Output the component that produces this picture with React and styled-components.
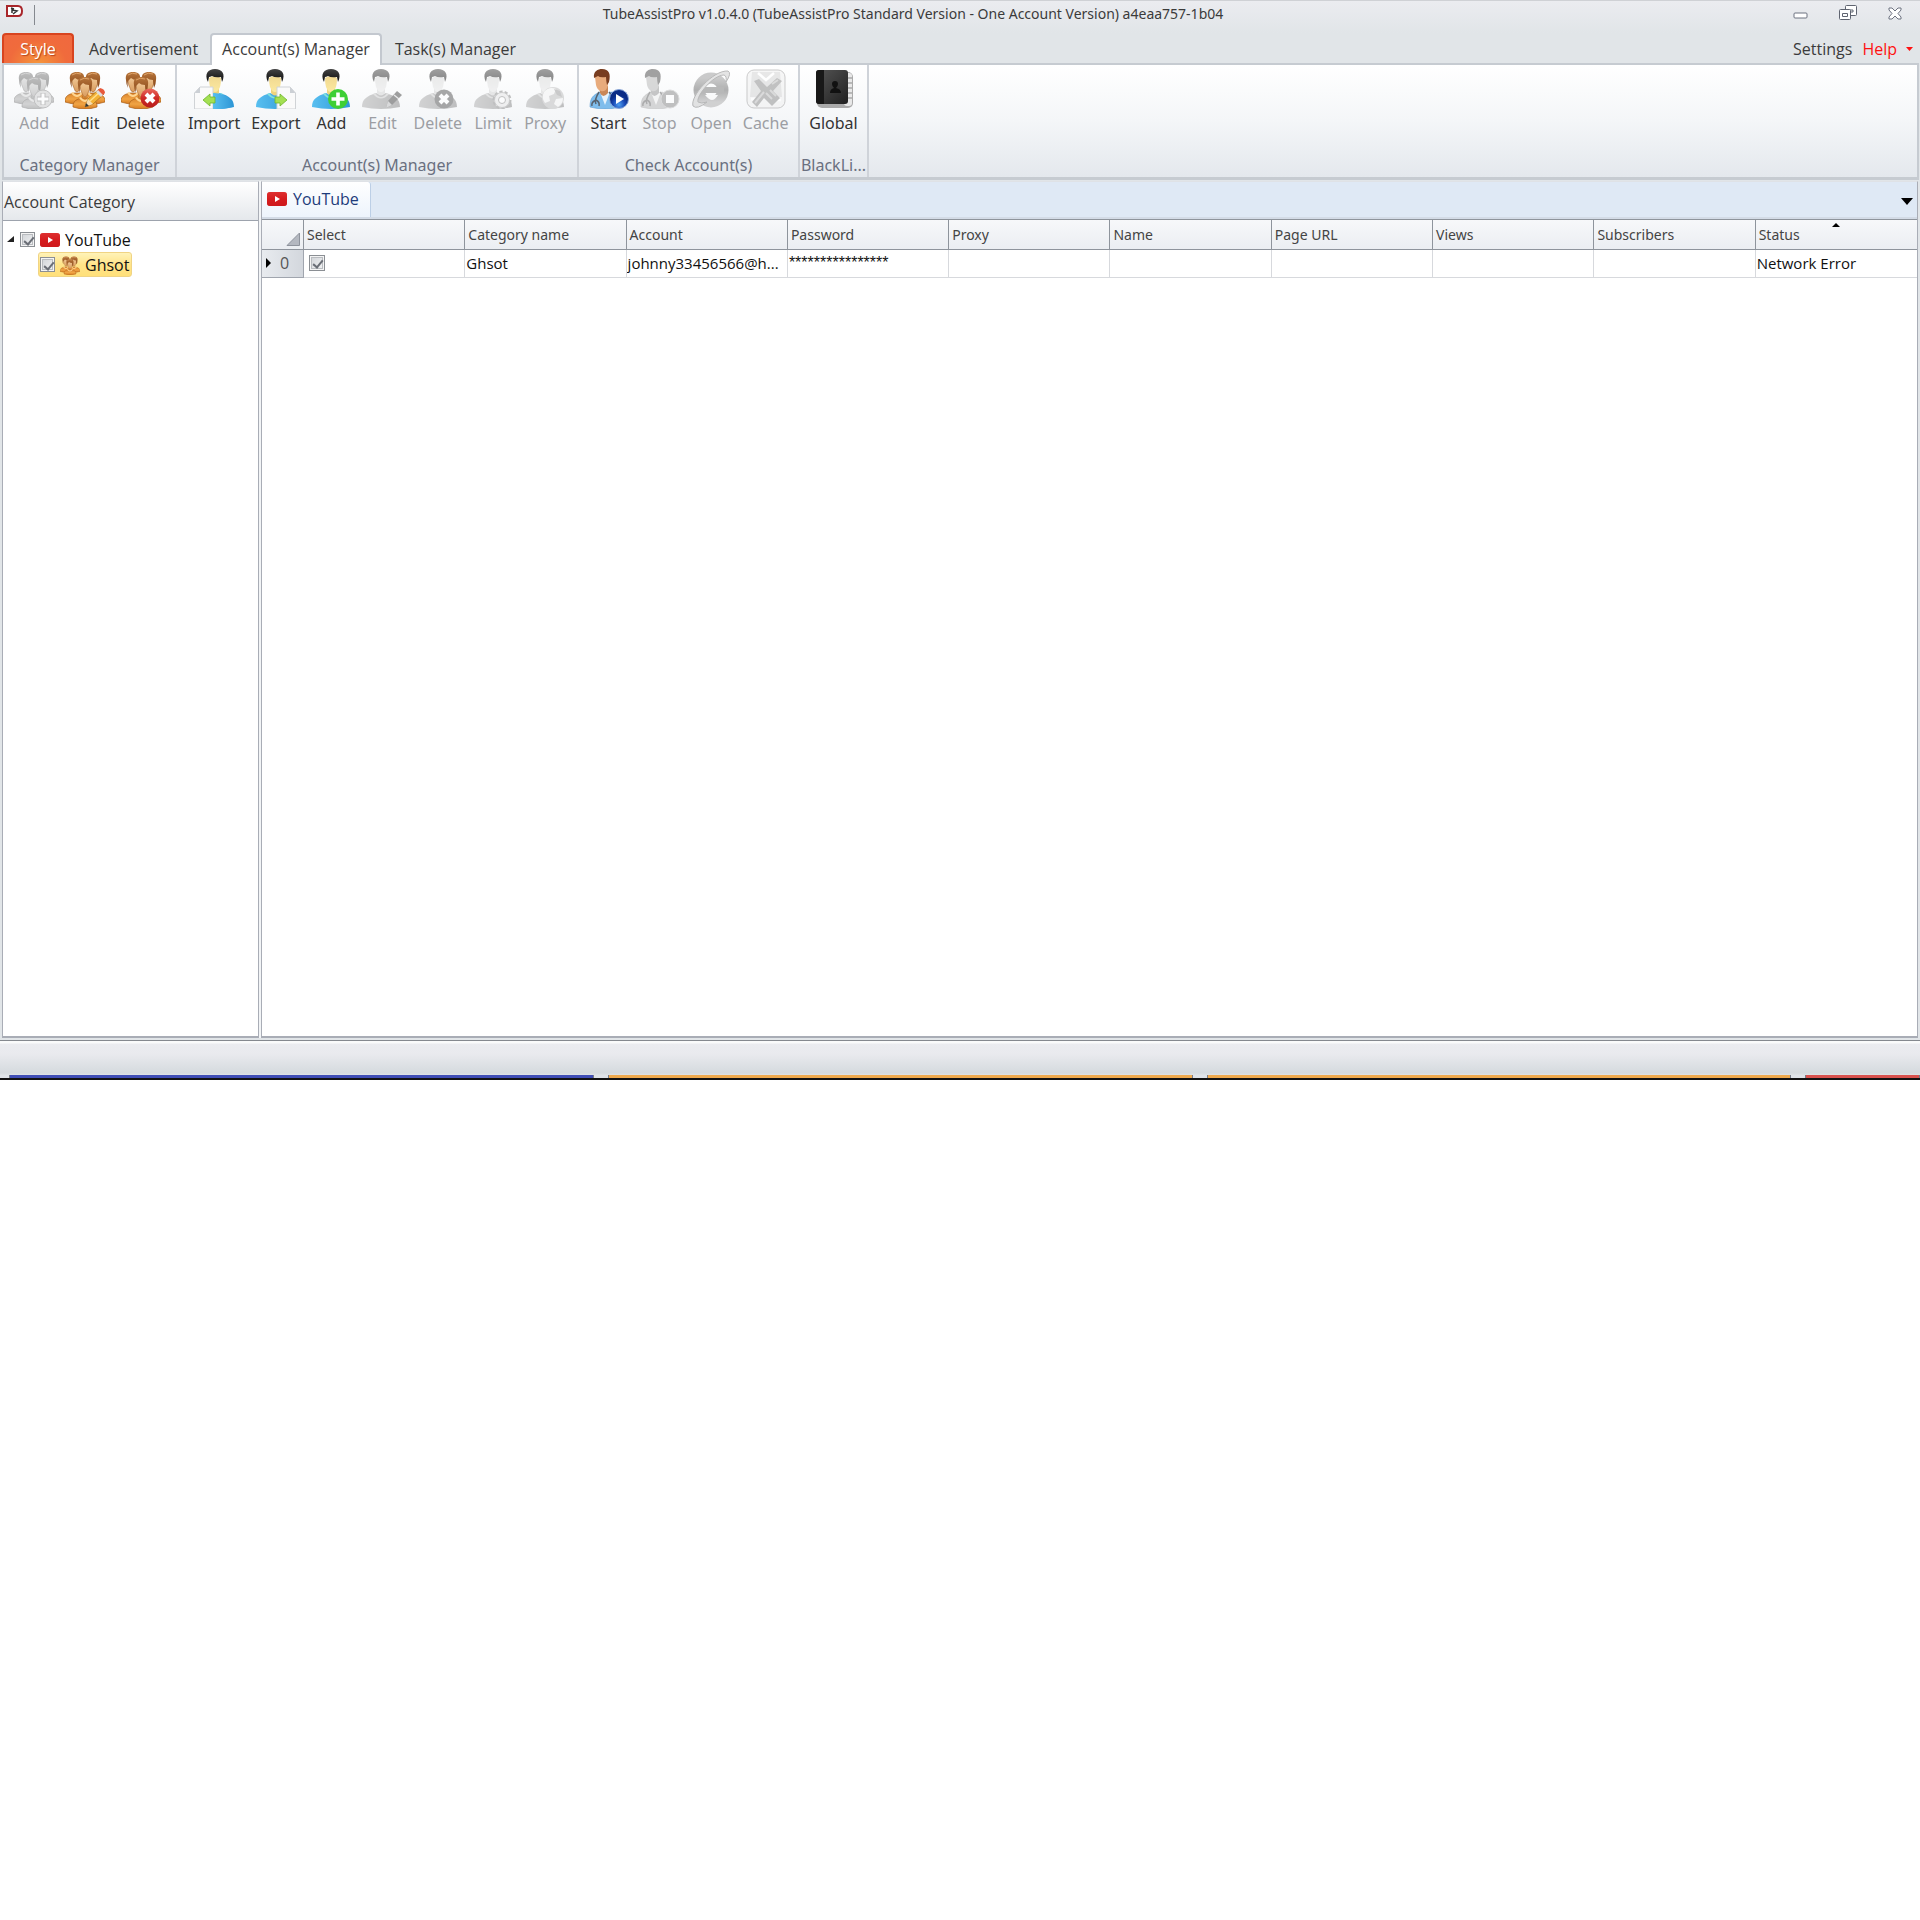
import styled, { createGlobalStyle, css } from 'styled-components'

const GlobalStyle = createGlobalStyle`
  * {
    box-sizing: border-box;
  }
  body {
    margin: 0;
    background: #fff;
    font-family: 'Open Sans', 'Noto Sans', sans-serif;
    font-size: 16px;
    line-height: 22px;
    color: #3b3b3b;
  }
  button {
    margin: 0;
    padding: 0;
    border: 0;
    background: none;
    color: inherit;
    font: inherit;
  }
`

const Window = styled.div`
  display: flex;
  flex-direction: column;
  min-height: 56.25vw;
  background: #e1e5e8;
`

const TitleBar = styled.header`
  display: flex;
  align-items: flex-start;
  height: 33px;
  padding: 4px 0 0 6px;
  border-top: 1px solid #cfd1d5;
  background: linear-gradient(#ebecf0, #e1e5e8);
`

const QuickAccess = styled.div`
  display: flex;
  width: 29px;
  height: 20px;
  border-right: 1px solid #85898f;
`

const WindowTitle = styled.h1`
  flex: 1;
  margin: 0;
  font-family: 'Noto Sans', sans-serif;
  font-size: 14px;
  font-weight: 400;
  line-height: 18px;
  text-align: center;
`

const WindowButtons = styled.div`
  display: flex;
  gap: 27px;
  padding-right: 15px;
  & > button {
    width: 20px;
    height: 18px;
  }
`

const TabBar = styled.nav`
  display: flex;
  align-items: flex-end;
  padding: 0 2px;
`

const RibbonTab = styled.button`
  position: relative;
  height: 30px;
  padding: 0 10px 0 11px;
  border: 1px solid transparent;
  border-bottom: 0;
  border-radius: 4px 4px 0 0;
  ${(props) =>
    props.$active &&
    css`
      z-index: 1;
      height: 32px;
      margin: 0 1px -2px;
      padding: 0 10px 2px;
      border: 2px solid #c3c8cf;
      border-bottom: 0;
      background: #fff;
    `}
`

const StyleButton = styled.button`
  width: 72px;
  height: 30px;
  margin-right: 3px;
  padding-bottom: 1px;
  border: 2px solid #d8441f;
  border-bottom: 0;
  border-radius: 4px 4px 0 0;
  background: radial-gradient(ellipse at 50% 110%, #f5983c, #f06b3c 60%, #f0683f);
  color: #fff;
  text-shadow: 1px 1px 1px #b8431c;
`

const TabBarEnd = styled.div`
  display: flex;
  gap: 10px;
  height: 28px;
  margin-left: auto;
  padding-right: 5px;
`

const HelpButton = styled.button`
  display: flex;
  align-items: center;
  gap: 9px;
  color: #f11;
`

const Ribbon = styled.section`
  display: flex;
  height: 117px;
  margin: 0 1px 0 2px;
  border: 2px solid #c6cbd1;
  border-bottom-width: 3px;
  background: linear-gradient(#fff, #f4f6f8 50%, #e4e8ed);
  font-family: 'Noto Sans', sans-serif;
`

const Group = styled.div`
  display: flex;
  flex-direction: column;
  justify-content: space-between;
  width: ${(props) => props.$width}px;
  border-right: 2px solid #cfd3d9;
  color: #6a7080;
`

const GroupButtons = styled.div`
  display: flex;
  justify-content: center;
  gap: 11px;
  padding-top: 4px;
`

const GroupLabel = styled.div`
  height: 23px;
  text-align: center;
  white-space: nowrap;
`

const ToolButton = styled.button`
  display: flex;
  flex-direction: column;
  align-items: center;
  gap: 3px;
  min-width: 40px;
  color: #333;
  &:disabled {
    color: #9c9ea3;
  }
  &:disabled > svg {
    filter: grayscale(1);
    opacity: 0.5;
  }
`

const Workspace = styled.main`
  flex: 1;
  display: flex;
  gap: 2px;
  margin: 1px 2px 2px;
  background: #f2f4f6;
`

const SidePanel = styled.aside`
  display: flex;
  flex-direction: column;
  width: 257px;
  border: 1px solid #a9adb6;
  border-bottom-width: 2px;
  border-top-color: #dfe2e6;
  background: #fff;
`

const PanelTitle = styled.h2`
  margin: 0;
  padding: 9px 1px 7px;
  border-bottom: 1px solid #9da3ad;
  background: linear-gradient(#fff, #e5e8ec);
  font-size: 16px;
  font-weight: 400;
`

const Tree = styled.ul`
  margin: 0;
  padding: 6px 0 0;
  list-style: none;
  color: #111;
`

const TreeRow = styled.li`
  display: flex;
  align-items: center;
  gap: 5px;
  width: fit-content;
  height: 25px;
  margin-left: ${(props) => props.$indent}px;
  padding: 0 2px 0 1px;
  border: 1px solid transparent;
  border-radius: 3px;
  ${(props) =>
    props.$selected &&
    css`
      border-color: #f0d484;
      background: linear-gradient(#fff3b8, #ffe48a 50%, #ffe07a);
    `}
  & > label {
    display: flex;
    align-items: center;
    gap: 5px;
  }
`

const CheckBox = styled.input.attrs({ type: 'checkbox' })`
  appearance: none;
  position: relative;
  width: 15px;
  height: 15px;
  margin: 0;
  border: 1px solid #8b8f94;
  background: linear-gradient(135deg, #cfd2d6, #f4f5f6);
  box-shadow: inset 0 0 0 1px #f4f4f4, inset 0 0 0 2px #b9bcc0;
  &:checked::after {
    content: '';
    position: absolute;
    top: 2px;
    left: 5px;
    width: 4px;
    height: 8px;
    border: solid #6a6e76;
    border-width: 0 2px 2px 0;
    transform: rotate(40deg);
  }
`

const ContentPanel = styled.section`
  flex: 1;
  display: flex;
  flex-direction: column;
  border: 1px solid #a9adb6;
  border-bottom-width: 2px;
  border-top-color: #dfe2e6;
  background: #fff;
`

const DocumentTabs = styled.div`
  display: flex;
  align-items: center;
  justify-content: space-between;
  height: 37px;
  padding: 0 4px 2px 0;
  border-bottom: 2px solid #d3dbe6;
  background: #dfe9f5;
`

const DocumentTab = styled.button`
  display: flex;
  align-items: center;
  gap: 6px;
  align-self: flex-start;
  height: 35px;
  padding: 0 11px 1px 5px;
  border-right: 1px solid #bccfe6;
  border-radius: 0 3px 0 0;
  background: linear-gradient(#fff, #edf4fc);
  color: #1e3c7b;
`

const Grid = styled.table`
  width: 100%;
  border-collapse: separate;
  border-spacing: 0;
  table-layout: fixed;
  color: #111;
`

const HeadCell = styled.th`
  position: relative;
  width: ${(props) => (props.$gutter ? '42px' : 'auto')};
  height: 31px;
  padding: 0 0 0 3px;
  border: solid #8e949c;
  border-width: 1px 1px 1px 0;
  background: linear-gradient(#f7f8fa, #ebeef2);
  color: #444;
  font-family: 'Noto Sans', sans-serif;
  font-size: 14px;
  font-weight: 400;
  line-height: 20px;
  text-align: left;
  &:last-child {
    border-right: 0;
  }
`

const Corner = styled.svg`
  position: absolute;
  right: 3px;
  bottom: 3px;
`

const SortMark = styled.svg`
  position: absolute;
  top: 3px;
  left: 50%;
  margin-left: -4px;
`

const Cell = styled.td`
  height: 28px;
  padding: 0 4px 2px 1px;
  border: solid #d7d9dd;
  border-width: 0 1px 1px 0;
  overflow: hidden;
  text-overflow: ellipsis;
  white-space: nowrap;
  font-size: 15px;
  line-height: 20px;
  &:last-child {
    border-right: 0;
  }
`

const PasswordCell = styled(Cell)`
  font-family: 'Liberation Sans', sans-serif;
  font-size: 16px;
`

const RowHead = styled.th`
  height: 28px;
  padding: 0;
  border: solid #a0a5ae;
  border-width: 0 1px 1px 0;
  background: linear-gradient(90deg, #e8ebef, #d3d7dd);
  font-size: 16px;
  font-weight: 400;
  line-height: 20px;
  color: #555;
  & > span {
    display: flex;
    align-items: center;
    gap: 9px;
    padding: 0 0 1px 4px;
  }
`

const CheckCell = styled(Cell)`
  & > input {
    display: block;
    width: 16px;
    height: 16px;
    margin-left: 4px;
  }
`

const StatusBar = styled.footer`
  height: 35px;
  border-top: 1px solid #85898f;
  background: linear-gradient(#fafbfb 2px, #ebecf0 3px, #e9eaee 13px, #d5dade 32px, #dfe3e6);
`

const Taskbar = styled.div`
  display: flex;
  gap: 14px;
  height: 5px;
  padding-left: 9px;
  border-bottom: 2px solid #111;
  overflow: hidden;
  background: #dfe3e8;
`

const TaskItem = styled.div`
  flex: ${(props) => (props.$last ? '1' : '0 0 30.6%')};
  background: ${(props) => props.$color};
  border: solid #777c88;
  border-width: 0 1px;
`

const Defs = styled.svg`
  position: absolute;
`

const gradients = (
  <Defs width="0" height="0" aria-hidden="true">
    <defs>
      <linearGradient id="shirt" x2="1">
        <stop stopColor="#58bff0" />
        <stop offset="1" stopColor="#2e97d6" />
      </linearGradient>
      <linearGradient id="skin" x2="0" y2="1">
        <stop stopColor="#f1d890" />
        <stop offset="1" stopColor="#fbe9a0" />
      </linearGradient>
      <linearGradient id="hair" x2="0" y2="1">
        <stop stopColor="#444" />
        <stop offset="1" stopColor="#0c0c0c" />
      </linearGradient>
      <linearGradient id="orange" x2="0" y2="1">
        <stop stopColor="#d9822b" />
        <stop offset=".55" stopColor="#f0a445" />
        <stop offset="1" stopColor="#d67a1e" />
      </linearGradient>
      <linearGradient id="brown" x2="0" y2="1">
        <stop stopColor="#b8763c" />
        <stop offset="1" stopColor="#844416" />
      </linearGradient>
      <linearGradient id="tan" x2="0" y2="1">
        <stop stopColor="#f6d3a4" />
        <stop offset="1" stopColor="#d99b5c" />
      </linearGradient>
      <linearGradient id="red" x2="0" y2="1">
        <stop stopColor="#ea6a5e" />
        <stop offset=".5" stopColor="#cf2a26" />
        <stop offset="1" stopColor="#b81e1c" />
      </linearGradient>
      <radialGradient id="play" cy=".8">
        <stop stopColor="#4f9ff0" />
        <stop offset=".6" stopColor="#1b4cb8" />
        <stop offset="1" stopColor="#0b2c86" />
      </radialGradient>
      <linearGradient id="steel" x2="0" y2="1">
        <stop stopColor="#999" />
        <stop offset=".5" stopColor="#666" />
        <stop offset="1" stopColor="#aaa" />
      </linearGradient>
      <linearGradient id="book" x2="1" y2="1">
        <stop stopColor="#555" />
        <stop offset="1" stopColor="#202020" />
      </linearGradient>
    </defs>
  </Defs>
)

const Svg = ({ children, size = 40 }) => (
  <svg width={size} height={size} viewBox="0 0 40 40" aria-hidden="true">
    {children}
  </svg>
)

const Member = ({ x, y }) => (
  <g transform={`translate(${x} ${y})`}>
    <path d="M-12 20c0-5 4-7 9-8h6c5 1 9 3 9 8v1q-12 4-24 0z" fill="url(#orange)" stroke="#a65c17" strokeWidth=".7" />
    <path d="M-4 11q4 6 8 0l2 1q-6 8-12 0z" fill="#ffd590" />
    <path d="M-5-2q0-5 5-5t5 5q0 6-2 9-1 4-3 4t-3-4q-2-3-2-9z" fill="url(#tan)" stroke="#a96a31" strokeWidth=".6" />
    <path d="M-7-1c-1-6 2-8 7-8s8 2 7 8q0 4-2 8-1-6-1-8-4 0-6-2-2 2-3 3-1 3 0 7-2-4-2-8z" fill="url(#brown)" />
    <path d="M-5-6q4-3 9-1" fill="none" stroke="#dda268" strokeWidth="1" />
  </g>
)

const People = ({ size, children }) => (
  <Svg size={size}>
    <Member x={12} y={12} />
    <Member x={28} y={12} />
    <Member x={20} y={17} />
    {children}
  </Svg>
)

const Person = ({ x = 0, children }) => (
  <Svg>
    <g transform={`translate(${x} 0)`}>
      <path d="M1 38c0-8 5-11 14-14l5 2 5-2c9 3 14 6 14 14q-19 4-38 0z" fill="url(#shirt)" />
      <path d="M14 24q6 8 12 0l2 1q-8 9-16 0z" fill="#7fe0e0" />
      <path d="M16 18h8v6q-4 5-8 0z" fill="#efd37c" />
      <path d="M14 9q6-4 12 0 0 6-1 9-2 5-5 5t-5-5q-1-3-1-9z" fill="url(#skin)" />
      <path d="M13 13C9 5 13 0 20 0s11 5 7 13l-1-5q-6 1-9-1-2 1-3 1z" fill="url(#hair)" />
    </g>
    {children}
  </Svg>
)

const Plus = ({ cx, cy, fill = '#3ecf35' }) => (
  <g transform={`translate(${cx} ${cy})`}>
    <circle r="10" fill={fill} />
    <path d="M0-6.500V6.500M-6.500 0H6.500" stroke="#fff" strokeWidth="3.600" />
  </g>
)

const GrayPlus = () => (
  <g transform="translate(29 30)">
    <circle r="9" fill="#ccc" stroke="#888" />
    <path d="M0-6V6M-6 0H6" stroke="#888" strokeWidth="5" />
    <path d="M0-5.500V5.500M-5.500 0H5.500" stroke="#fff" strokeWidth="3" />
  </g>
)

const Cross = ({ cx, cy, fill = 'url(#red)' }) => (
  <g transform={`translate(${cx} ${cy})`}>
    <circle r="9.500" fill={fill} />
    <path d="M-4-4L4 4M4-4L-4 4" stroke="#fff" strokeWidth="4" />
  </g>
)

const Pencil = ({ x, y }) => (
  <g transform={`translate(${x} ${y})`}>
    <path d="M0 18l3-8 11-10 5 5-11 10z" fill="#f3b236" stroke="#a8741d" strokeWidth=".8" />
    <path d="M5 12l11-10" stroke="#ffe08b" strokeWidth="1.500" />
    <path d="M12 2l3-3q5 1 5 5l-3 3z" fill="#e8593c" />
    <path d="M11 3l2-2 5 5-2 2z" fill="#ddd" />
    <path d="M0 18l3-8 5 5z" fill="#f6dcb0" />
    <path d="M0 18l1-4 3 3z" fill="#333" />
  </g>
)

const GrayPencil = () => (
  <g transform="translate(24 22)">
    <path d="M0 17l2-7L11 0l5 4-10 10z" fill="#444" />
    <path d="M8 4l5 4" stroke="#ddd" strokeWidth="1.500" />
    <path d="M0 17l2-7 4 4z" fill="#bbb" />
  </g>
)

const Sheet = ({ x, flip }) => (
  <g transform={flip ? `translate(${x} 0) scale(-1 1)` : `translate(${x} 0)`}>
    <path d="M6 18h13v22H.5V24z" fill="#fafafa" stroke="#d0d3d6" />
    <path d="M6 18v6H.5z" fill="#ccd0d5" />
  </g>
)

const Gear = () => (
  <g transform="translate(29 31)">
    <circle r="8" fill="#ddd" stroke="#888" strokeWidth="3" strokeDasharray="3 2" />
    <circle r="7.500" fill="#e6e6e6" stroke="#999" strokeWidth=".8" />
    <circle r="3.500" fill="#fff" stroke="#888" />
  </g>
)

const Globe = () => (
  <g transform="translate(28 29)">
    <circle r="11" fill="#bbb" />
    <path d="M-9-6q5-6 12-3l-2 5-5 2 1 5-5 2q-4-5-1-11zM3 1l7-1q0 6-5 9l-4-3z" fill="#f4f4f4" />
    <path d="M1-9l6 2 2 6-5-2z" fill="#999" />
  </g>
)

const Doctor = ({ children }) => (
  <Svg>
    <path d="M1 38c0-9 3-12 10-15l6 3 5-3c7 3 9 7 9 15q-15 4-30 0z" fill="#7fbdec" stroke="#5a9bd0" strokeWidth=".6" />
    <path d="M11 23l5 13 5-13z" fill="#e7f3fc" />
    <path d="M10 17h9v7q-5 6-8 0z" fill="#c98757" />
    <path d="M6 8q7-6 13 0 1 7-1 11-2 4-6 3-4-1-5-6z" fill="#e8ab7c" />
    <path d="M5 9C4 2 9 0 13 0c7 0 9 5 7 13l-2 3q-1-5-1-8-6 1-8-1-2 1-4 2z" fill="#783d20" />
    <path d="M10 23q-5 8-3 12M20 23q6 6 4 12M7 31q-5 2-4 6M7 31q4 2 3 6" fill="none" stroke="#56616d" strokeWidth="1.500" />
    {children}
  </Svg>
)

const Tube = ({ width }) => (
  <svg width={width} height="16" viewBox="0 0 20 16" aria-hidden="true">
    <rect y="1" width="20" height="14" rx="3" fill="url(#red)" />
    <rect y="1" width="20" height="14" rx="3" fill="#d8171d" opacity=".7" />
    <path d="M8 5l5 3-5 3z" fill="#fff" />
  </svg>
)

const Triangle = ({ width, height, fill }) => (
  <svg width={width} height={height} viewBox="0 0 10 6" preserveAspectRatio="none" aria-hidden="true">
    <path d="M0 0h10L5 6z" fill={fill} />
  </svg>
)

const groups = [
  {
    label: 'Category Manager',
    width: 173,
    tools: [
      { label: 'Add', off: true, icon: <People><GrayPlus /></People> },
      { label: 'Edit', icon: <People><Pencil x={20} y={20} /></People> },
      { label: 'Delete', icon: <People><Cross cx={29} cy={29} /></People> },
    ],
  },
  {
    label: 'Account(s) Manager',
    width: 402,
    tools: [
      {
        label: 'Import',
        icon: (
          <Person x={1}>
            <Sheet x={0} />
            <path d="M19 24c9 0 21 5 20 14q-11 3-20 2z" fill="url(#shirt)" />
            <path d="M9 31l7-6v3h5v6h-5v3z" fill="#a4e052" stroke="#6fb52c" strokeWidth=".8" />
          </Person>
        ),
      },
      {
        label: 'Export',
        icon: (
          <Person x={-1}>
            <Sheet x={40} flip />
            <path d="M31 31l-7-6v3h-5v6h5v3z" fill="#a4e052" stroke="#6fb52c" strokeWidth=".8" />
          </Person>
        ),
      },
      { label: 'Add', icon: <Person><Plus cx={27} cy={30} /></Person> },
      { label: 'Edit', off: true, icon: <Person x={-1}><GrayPencil /></Person> },
      { label: 'Delete', off: true, icon: <Person><Cross cx={26} cy={30} fill="#555" /></Person> },
      { label: 'Limit', off: true, icon: <Person><Gear /></Person> },
      { label: 'Proxy', off: true, icon: <Person><Globe /></Person> },
    ],
  },
  {
    label: 'Check Account(s)',
    width: 221,
    tools: [
      {
        label: 'Start',
        icon: (
          <Doctor>
            <circle cx="30" cy="30" r="9.500" fill="url(#play)" stroke="#8aa7d8" />
            <path d="M27 25l8 5-8 5z" fill="#fff" />
          </Doctor>
        ),
      },
      {
        label: 'Stop',
        off: true,
        icon: (
          <Doctor>
            <circle cx="30" cy="30" r="9" fill="#888" stroke="#bbb" />
            <path d="M26 26h8v8h-8z" fill="#fff" />
          </Doctor>
        ),
      },
      {
        label: 'Open',
        off: true,
        icon: (
          <Svg>
            <circle cx="20" cy="21" r="12" fill="none" stroke="url(#steel)" strokeWidth="11" />
            <path d="M11 18h22v6H11z" fill="#777" />
            <path d="M14 26h13q-3 5-6 5t-7-5z" fill="#f9fafb" />
            <path d="M2 37C-1 27 22 1 37 2q4 2-2 11 1-6-2-7C22 6 5 27 7 33q3 2 9 0Q6 41 2 37z" fill="#ccc" stroke="#777" />
          </Svg>
        ),
      },
      {
        label: 'Cache',
        off: true,
        icon: (
          <Svg>
            <rect x="1" y="1" width="38" height="38" rx="7" fill="#f0f0f0" stroke="#999" />
            <path d="M6 3h28l2 25H4z" fill="#d2d2d2" />
            <path d="M12 4l8 7 8-7M5 30h9M26 31h9" fill="none" stroke="#fff" strokeWidth="2.500" />
            <path d="M8 12l5-2 8 8 10-9 5 3-9 10 7 7-8 8-8-8-7 9-5-5 9-11z" fill="#888" />
            <path d="M9 34l9-11M26 15l6-4M20 24l6 6M24 21l6 6" stroke="#bbb" strokeWidth="2" />
          </Svg>
        ),
      },
    ],
  },
  {
    label: 'BlackLi...',
    width: 69,
    tools: [
      {
        label: 'Global',
        icon: (
          <Svg>
            <rect x="3" y="3" width="36" height="36" rx="5" fill="#aaa" />
            <rect x="30" y="4" width="8" height="33" rx="3" fill="#e8e8e8" />
            <path d="M34 9h4M34 14h4M34 19h4M34 24h4M34 29h4" stroke="#888" />
            <rect x="2" y="1" width="32" height="34" rx="3" fill="url(#book)" />
            <path d="M5 1h5v34H5q-3 0-3-3V4q0-3 3-3z" fill="#181818" />
            <path d="M16 24q0-4 4-5-2-2-2-4 0-3 3-3t3 3q0 2-2 4 5 1 5 5z" fill="#111" />
          </Svg>
        ),
      },
    ],
  },
]

const columns = ['Select', 'Category name', 'Account', 'Password', 'Proxy', 'Name', 'Page URL', 'Views', 'Subscribers', 'Status']

const tasks = ['#3f4db5', '#efaa4e', '#efaa4e', '#d9524e']

export default function App() {
  return (
    <>
      <GlobalStyle />
      {gradients}
      <Window>
        <TitleBar>
          <QuickAccess>
            <svg width="17" height="12" viewBox="0 0 17 12" aria-hidden="true">
              <path d="M1 1h11q4 0 4 5t-4 5H1z" fill="#fff" stroke="#a8262b" strokeWidth="2" />
              <path d="M5 3l3 1M6 4v4M6 5l5 1-4 3" fill="none" stroke="#333" strokeWidth="1.500" />
            </svg>
          </QuickAccess>
          <WindowTitle>
            TubeAssistPro v1.0.4.0 (TubeAssistPro Standard Version - One Account Version) a4eaa757-1b04
          </WindowTitle>
          <WindowButtons>
            <button aria-label="Minimize">
              <svg width="20" height="18" viewBox="0 0 20 18">
                <rect x="3" y="8" width="13" height="5" rx="1" fill="#fff" stroke="#6d7280" />
              </svg>
            </button>
            <button aria-label="Restore">
              <svg width="20" height="18" viewBox="0 0 20 18" fill="#fff" stroke="#5f6470">
                <rect x="7.500" y=".5" width="11" height="10" rx="1" />
                <path d="M11 5h4v2h-4z" />
                <rect x="1.500" y="4.500" width="11" height="10" rx="1" />
                <path d="M4.500 8.500h5v3h-5z" />
              </svg>
            </button>
            <button aria-label="Close">
              <svg width="20" height="18" viewBox="0 0 20 18">
                <path d="M4 3h3l3 3 3-3h3v2l-3 3.500 3 3.500v2h-3l-3-3-3 3H4v-2l3-3.500L4 5z" fill="#fff" stroke="#6d7280" />
              </svg>
            </button>
          </WindowButtons>
        </TitleBar>
        <TabBar>
          <StyleButton>Style</StyleButton>
          <RibbonTab>Advertisement</RibbonTab>
          <RibbonTab $active>Account(s) Manager</RibbonTab>
          <RibbonTab>Task(s) Manager</RibbonTab>
          <TabBarEnd>
            <button>Settings</button>
            <HelpButton>
              Help
              <Triangle width={7} height={4} fill="#f11" />
            </HelpButton>
          </TabBarEnd>
        </TabBar>
        <Ribbon>
          {groups.map((group) => (
            <Group key={group.label} $width={group.width}>
              <GroupButtons>
                {group.tools.map((tool) => (
                  <ToolButton key={tool.label} disabled={tool.off}>
                    {tool.icon}
                    {tool.label}
                  </ToolButton>
                ))}
              </GroupButtons>
              <GroupLabel>{group.label}</GroupLabel>
            </Group>
          ))}
        </Ribbon>
        <Workspace>
          <SidePanel>
            <PanelTitle>Account Category</PanelTitle>
            <Tree>
              <TreeRow $indent={1}>
                <svg width="9" height="9" viewBox="0 0 9 9" aria-hidden="true">
                  <path d="M1 7h7V1z" fill="#222" />
                </svg>
                <label>
                  <CheckBox defaultChecked />
                  <Tube width={20} />
                  YouTube
                </label>
              </TreeRow>
              <TreeRow $indent={35} $selected>
                <label>
                  <CheckBox defaultChecked />
                  <People size={20} />
                  Ghsot
                </label>
              </TreeRow>
            </Tree>
          </SidePanel>
          <ContentPanel>
            <DocumentTabs>
              <DocumentTab>
                <Tube width={20} />
                YouTube
              </DocumentTab>
              <button aria-label="Open tabs">
                <Triangle width={12} height={7} fill="#000" />
              </button>
            </DocumentTabs>
            <Grid>
              <thead>
                <tr>
                  <HeadCell $gutter>
                    <Corner width="14" height="14" viewBox="0 0 14 14" aria-hidden="true">
                      <path d="M1 13.500h12.500V1z" fill="#b4b8c0" stroke="#8e939c" />
                    </Corner>
                  </HeadCell>
                  {columns.map((name) => (
                    <HeadCell key={name}>
                      {name}
                      {name === 'Status' && (
                        <SortMark width="8" height="4" viewBox="0 0 8 4" aria-hidden="true">
                          <path d="M0 4h8L4 0z" />
                        </SortMark>
                      )}
                    </HeadCell>
                  ))}
                </tr>
              </thead>
              <tbody>
                <tr>
                  <RowHead>
                    <span>
                      <svg width="5" height="10" viewBox="0 0 5 10" aria-hidden="true">
                        <path d="M0 0l5 5-5 5z" />
                      </svg>
                      0
                    </span>
                  </RowHead>
                  <CheckCell>
                    <CheckBox defaultChecked aria-label="Select row 0" />
                  </CheckCell>
                  <Cell>Ghsot</Cell>
                  <Cell>johnny33456566@h...</Cell>
                  <PasswordCell>****************</PasswordCell>
                  <Cell />
                  <Cell />
                  <Cell />
                  <Cell />
                  <Cell />
                  <Cell>Network Error</Cell>
                </tr>
              </tbody>
            </Grid>
          </ContentPanel>
        </Workspace>
        <StatusBar />
        <Taskbar>
          {tasks.map((color, i) => (
            <TaskItem key={i} $color={color} $last={i === tasks.length - 1} />
          ))}
        </Taskbar>
      </Window>
    </>
  )
}
